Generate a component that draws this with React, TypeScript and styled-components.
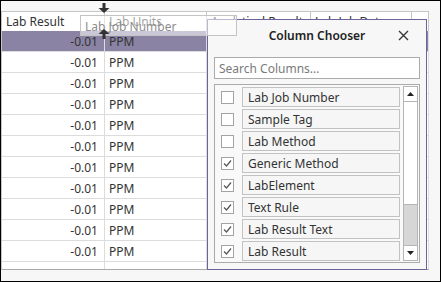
import React from 'react';
import styled, { createGlobalStyle } from 'styled-components';

const GlobalStyle = createGlobalStyle`
  body {
    margin: 0;
    font-family: 'Noto Sans', 'Open Sans', sans-serif;
    font-size: 12px;
    color: #333;
  }
`;

const COLS = [103, 102, 104, 101, 17];
const HEADERS = ['Lab Result', 'Lab Units', 'Analytical Result', 'Lab Job Date', ''];

const COLUMNS = [
  { name: 'Lab Job Number', checked: false },
  { name: 'Sample Tag', checked: false },
  { name: 'Lab Method', checked: false },
  { name: 'Generic Method', checked: true },
  { name: 'LabElement', checked: true },
  { name: 'Text Rule', checked: true },
  { name: 'Lab Result Text', checked: true },
  { name: 'Lab Result', checked: true },
];

const Window = styled.div`
  position: relative;
  box-sizing: border-box;
  width: 441px;
  height: 282px;
  border: 1px solid #000;
  background: #f7f7f7;
  padding-top: 10px;
  overflow: hidden;
`;

const Grid = styled.div`
  width: 427px;
  border-left: 1px solid #c6c6c6;
  background: #fff;
`;

const Row = styled.div<{ $header?: boolean; $selected?: boolean }>`
  display: grid;
  grid-template-columns: ${COLS.map((c) => `${c}px`).join(' ')};
  box-sizing: border-box;
  height: ${(p) => (p.$header ? 20 : 21)}px;
  flex-shrink: 0;
  border-top: ${(p) => (p.$header ? '1px solid #c6c6c6' : 'none')};
  border-bottom: ${(p) => (p.$header ? 'none' : '1px solid #dcdcdc')};
  background: ${(p) => (p.$selected ? '#8a83a4' : '#fff')};
`;

const Cell = styled.div<{ $align?: 'left' | 'right'; $header?: boolean }>`
  box-sizing: border-box;
  border-right: 1px solid ${(p) => (p.$header ? '#c6c6c6' : '#dcdcdc')};
  padding: 0 6px 0 4px;
  display: flex;
  align-items: center;
  justify-content: ${(p) => (p.$align === 'right' ? 'flex-end' : 'flex-start')};
  white-space: nowrap;
  overflow: hidden;
  color: #333;
`;

const Body = styled.div`
  box-sizing: border-box;
  height: 239px;
  overflow: hidden;
  display: flex;
  flex-direction: column;
  border-bottom: 1px solid #a9a9a9;
`;

const Ghost = styled.div`
  position: absolute;
  left: 79px;
  top: 14px;
  width: 157px;
  height: 21px;
  box-sizing: border-box;
  border: 1px solid #c4c4c4;
  background: rgba(255, 255, 255, 0.55);
  color: #8c8c8c;
  padding: 2px 0 0 4px;
  z-index: 3;
`;

const DropArrow = styled.svg<{ $top: number }>`
  position: absolute;
  left: 97px;
  top: ${(p) => p.$top}px;
  z-index: 4;
`;

const Chooser = styled.div`
  position: absolute;
  left: 206px;
  top: 18px;
  width: 220px;
  height: 251px;
  box-sizing: border-box;
  border: 1px solid #6b6399;
  background: #f7f7f7;
  padding: 0 6px;
  display: flex;
  flex-direction: column;
  z-index: 2;
`;

const TitleBar = styled.div`
  position: relative;
  height: 30px;
  margin-bottom: 7px;
  display: flex;
  align-items: center;
  justify-content: center;
  font-weight: 600;
  font-size: 12px;
  color: #222;
`;

const Close = styled.svg`
  position: absolute;
  right: 11px;
  top: 10px;
`;

const Search = styled.div`
  box-sizing: border-box;
  height: 22px;
  border: 1px solid #ababab;
  background: #fff;
  color: #7a7a7a;
  padding-left: 4px;
  display: flex;
  align-items: center;
  margin-bottom: 5px;
`;

const ListBox = styled.div`
  box-sizing: border-box;
  height: 179px;
  border: 1px solid #ababab;
  background: #f9f9f9;
  display: flex;
`;

const Items = styled.div`
  flex: 1;
  padding: 2px 0 0 6px;
  display: flex;
  flex-direction: column;
  gap: 2px;
  overflow: hidden;
`;

const Item = styled.div`
  display: flex;
  align-items: center;
  height: 20px;
  flex-shrink: 0;
`;

const CheckBox = styled.div`
  box-sizing: border-box;
  width: 13px;
  height: 13px;
  border: 1px solid #a3a3a3;
  background: #fff;
  margin-right: 8px;
  display: flex;
  align-items: center;
  justify-content: center;
`;

const ItemLabel = styled.div`
  box-sizing: border-box;
  width: 158px;
  height: 20px;
  border: 1px solid #c2c2c2;
  background: #f6f6f6;
  padding-left: 5px;
  display: flex;
  align-items: center;
  color: #333;
`;

const ScrollBar = styled.div`
  box-sizing: border-box;
  width: 15px;
  margin: 1px 1px 1px 3px;
  border: 1px solid #b5b5b5;
  background: #d6d6d6;
  display: flex;
  flex-direction: column;
`;

const ScrollButton = styled.div<{ $bottom?: boolean }>`
  height: 14px;
  flex-shrink: 0;
  background: #fff;
  display: flex;
  align-items: center;
  justify-content: center;
  border-bottom: ${(p) => (p.$bottom ? 'none' : '1px solid #b5b5b5')};
  border-top: ${(p) => (p.$bottom ? '1px solid #b5b5b5' : 'none')};
  margin-top: ${(p) => (p.$bottom ? 'auto' : '0')};
`;

const Thumb = styled.div`
  height: 102px;
  flex-shrink: 0;
  background: #fff;
  border-bottom: 1px solid #b5b5b5;
`;

const Check = () => (
  <svg width="11" height="11" viewBox="0 0 11 11">
    <path d="M2 5.5 L4.5 8 L9 2.5" fill="none" stroke="#555" strokeWidth="1.2" />
  </svg>
);

export default function App() {
  const rows = Array.from({ length: 11 });
  return (
    <Window>
      <GlobalStyle />
      <Grid>
        <Row $header>
          {HEADERS.map((h, i) => (
            <Cell key={i} $header>
              {h}
            </Cell>
          ))}
        </Row>
        <Body>
          {rows.map((_, i) => (
            <Row key={i} $selected={i === 0}>
              <Cell $align="right">-0.01</Cell>
              <Cell>PPM</Cell>
              <Cell />
              <Cell />
              <Cell />
            </Row>
          ))}
          <Row>
            <Cell />
            <Cell />
            <Cell />
            <Cell />
            <Cell />
          </Row>
        </Body>
      </Grid>

      <DropArrow $top={2} width="12" height="10" viewBox="0 0 12 10">
        <rect x="4.5" y="0" width="3" height="5" fill="#333" />
        <path d="M0.5 5 H11.5 L6 10 Z" fill="#333" />
      </DropArrow>
      <DropArrow $top={28} width="12" height="10" viewBox="0 0 12 10">
        <path d="M0.5 5 H11.5 L6 0 Z" fill="#333" />
        <rect x="4.5" y="5" width="3" height="5" fill="#333" />
      </DropArrow>

      <Ghost>Lab Job Number</Ghost>

      <Chooser>
        <TitleBar>
          Column Chooser
          <Close width="11" height="11" viewBox="0 0 11 11">
            <path d="M1 1 L10 10 M10 1 L1 10" stroke="#333" strokeWidth="1.3" />
          </Close>
        </TitleBar>
        <Search>Search Columns...</Search>
        <ListBox>
          <Items>
            {COLUMNS.map((c) => (
              <Item key={c.name}>
                <CheckBox>{c.checked && <Check />}</CheckBox>
                <ItemLabel>{c.name}</ItemLabel>
              </Item>
            ))}
          </Items>
          <ScrollBar>
            <ScrollButton>
              <svg width="7" height="4" viewBox="0 0 7 4">
                <path d="M0 4 L3.5 0 L7 4 Z" fill="#222" />
              </svg>
            </ScrollButton>
            <Thumb />
            <ScrollButton $bottom>
              <svg width="7" height="4" viewBox="0 0 7 4">
                <path d="M0 0 L3.5 4 L7 0 Z" fill="#222" />
              </svg>
            </ScrollButton>
          </ScrollBar>
        </ListBox>
      </Chooser>
    </Window>
  );
}
